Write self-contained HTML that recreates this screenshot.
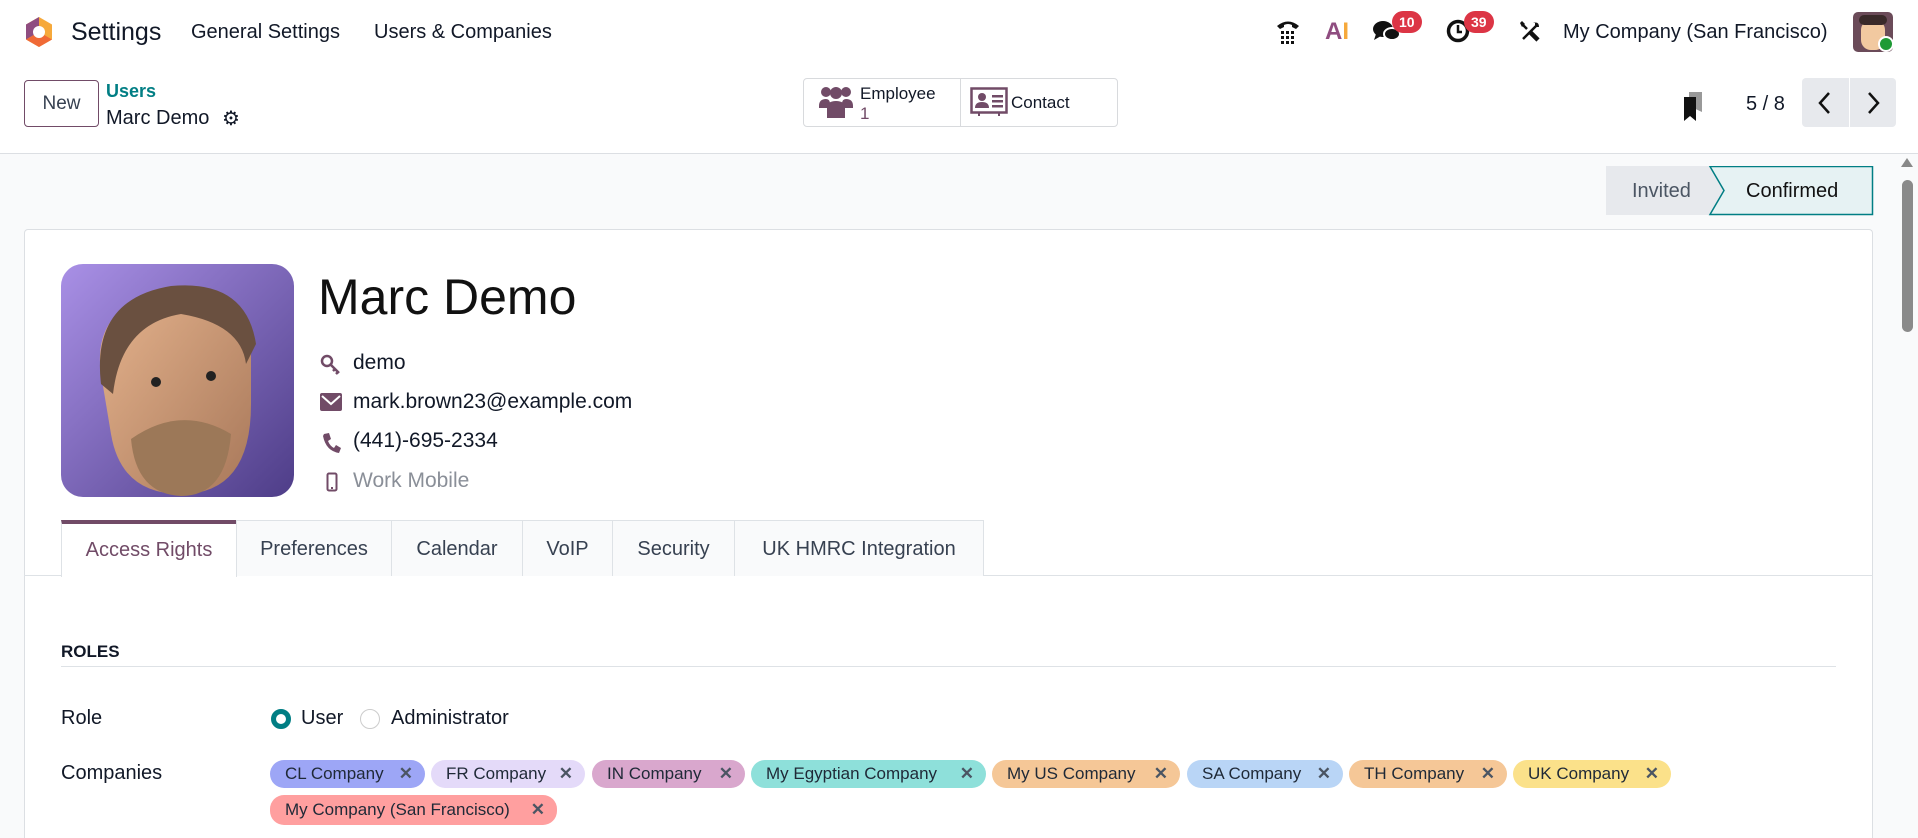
<!DOCTYPE html>
<html><head><meta charset="utf-8"><style>
*{box-sizing:border-box;margin:0;padding:0}
html,body{width:1918px;height:838px;overflow:hidden}
body{background:#fff;font-family:"Liberation Sans",sans-serif;color:#111827;position:relative}
.a{position:absolute;white-space:nowrap}
.badge{position:absolute;background:#dc3545;color:#fff;font-size:14px;font-weight:bold;border-radius:12px;height:22px;line-height:22px;padding:0 7px}
.tag{position:absolute;height:28px;line-height:28px;border-radius:14px;font-size:17px;padding-left:15px;color:#1f2937}
.tag span{position:absolute;right:12px;top:0;font-weight:bold;color:#4b5563;font-size:17px}
.tab{position:absolute;top:520px;height:56px;line-height:56px;text-align:center;font-size:20px;background:#f9fafb;border:1px solid #dee2e6;border-bottom:none;color:#374151}
</style></head><body>
<svg class="a" style="left:24px;top:17px" width="30" height="30" viewBox="0 0 30 30">
<polygon points="15,0 28,7.5 28,22.5 15,30 2,22.5 2,7.5" fill="#f6a93b"/>
<polygon points="15,0 2,7.5 2,22.5 15,15" fill="#8f4d80"/>
<polygon points="2,22.5 15,30 28,22.5 15,15" fill="#f06a36"/>
<circle cx="15" cy="15" r="6" fill="#fff"/></svg>
<div class="a" style="left:71px;top:18px;font-size:25px">Settings</div>
<div class="a" style="left:191px;top:21px;font-size:20px">General Settings</div>
<div class="a" style="left:374px;top:21px;font-size:20px">Users &amp; Companies</div>
<svg class="a" style="left:1275px;top:17px" width="26" height="28" viewBox="0 0 26 28"><path d="M2 9 Q13 0 24 9 L21 12 L17 10 L17 8 Q13 6 9 8 L9 10 L5 12Z" fill="#111"/><g fill="#111"><rect x="6" y="14" width="3" height="3"/><rect x="11" y="14" width="3" height="3"/><rect x="16" y="14" width="3" height="3"/><rect x="6" y="19" width="3" height="3"/><rect x="11" y="19" width="3" height="3"/><rect x="16" y="19" width="3" height="3"/><rect x="6" y="24" width="3" height="3"/><rect x="11" y="24" width="3" height="3"/><rect x="16" y="24" width="3" height="3"/></g></svg>
<div class="a" style="left:1325px;top:18px;font-size:24px;font-weight:bold;color:#8f4d80">A<span style="color:#f6a93b">I</span></div>
<svg class="a" style="left:1372px;top:19px" width="30" height="26" viewBox="0 0 30 26"><ellipse cx="11" cy="10" rx="10" ry="8" fill="#111"/><path d="M4 15 L2 21 L9 17Z" fill="#111"/><ellipse cx="20" cy="15" rx="8" ry="6" fill="#111" stroke="#fff" stroke-width="2"/></svg>
<div class="badge" style="left:1392px;top:11px">10</div>
<svg class="a" style="left:1446px;top:18px" width="26" height="26" viewBox="0 0 26 26"><circle cx="12" cy="13" r="9.5" fill="none" stroke="#111" stroke-width="3.5"/><path d="M12 7 V14 H16" stroke="#111" stroke-width="2.5" fill="none"/></svg>
<div class="badge" style="left:1464px;top:11px">39</div>
<svg class="a" style="left:1518px;top:20px" width="24" height="24" viewBox="0 0 24 24"><path d="M5 19 L19 5" stroke="#111" stroke-width="2.5"/><path d="M15 3 Q21 1 21 7 L18 7 L17 6 L17 3Z" fill="#111"/><path d="M4 4 L9 9" stroke="#111" stroke-width="2.5"/><path d="M2 3 L4 1 L7 4 L4 7Z" fill="#111"/><path d="M12 12 L20 20" stroke="#111" stroke-width="4.5"/></svg>
<div class="a" style="left:1563px;top:21px;font-size:20px">My Company (San Francisco)</div>
<div class="a" style="left:1853px;top:12px;width:40px;height:40px;border-radius:5px;background:#6b4b59;overflow:hidden"><div style="position:absolute;left:8px;top:8px;width:24px;height:30px;border-radius:10px;background:#f2c9a0"></div><div style="position:absolute;left:6px;top:3px;width:28px;height:10px;border-radius:6px;background:#3a2a2a"></div></div>
<div class="a" style="left:1878px;top:36px;width:16px;height:16px;border-radius:50%;background:#1e9a35;border:2px solid #fff"></div>
<div class="a" style="left:24px;top:80px;width:75px;height:47px;border:1px solid #714b67;border-radius:4px;text-align:center;line-height:45px;font-size:19px;color:#374151">New</div>
<div class="a" style="left:106px;top:81px;font-size:18px;color:#017e84;font-weight:bold">Users</div>
<div class="a" style="left:106px;top:107px;font-size:20px">Marc Demo</div>
<div class="a" style="left:222px;top:106px;font-size:20px">⚙</div>
<div class="a" style="left:803px;top:78px;width:315px;height:49px;border:1px solid #d8dadd;border-radius:4px"></div>
<div class="a" style="left:960px;top:79px;width:1px;height:47px;background:#d8dadd"></div>
<svg class="a" style="left:818px;top:84px" width="36" height="36" viewBox="0 0 36 36" fill="#714b67"><circle cx="8" cy="8" r="5"/><circle cx="28" cy="8" r="5"/><circle cx="18" cy="9" r="6"/><path d="M1 22 Q1 15 8 15 Q12 15 12 20 V24 H1Z"/><path d="M35 22 Q35 15 28 15 Q24 15 24 20 V24 H35Z"/><path d="M9 34 V24 Q9 17 18 17 Q27 17 27 24 V34Z"/></svg>
<div class="a" style="left:860px;top:84px;font-size:17px">Employee</div>
<div class="a" style="left:860px;top:104px;font-size:17px;color:#714b67">1</div>
<svg class="a" style="left:970px;top:87px" width="38" height="30" viewBox="0 0 38 30"><rect x="1.5" y="1.5" width="35" height="24" fill="none" stroke="#714b67" stroke-width="2.5"/><circle cx="12" cy="10" r="4" fill="#714b67"/><path d="M5 21 Q5 15 12 15 Q19 15 19 21Z" fill="#714b67"/><rect x="22" y="8" width="11" height="2.5" fill="#714b67"/><rect x="22" y="13" width="11" height="2.5" fill="#714b67"/><rect x="22" y="18" width="11" height="2.5" fill="#714b67"/><path d="M9 26 V29 M29 26 V29" stroke="#714b67" stroke-width="2"/></svg>
<div class="a" style="left:1011px;top:93px;font-size:17px">Contact</div>
<svg class="a" style="left:1682px;top:92px" width="22" height="30" viewBox="0 0 22 30"><path d="M7 0 H20 V20 L7 14Z" fill="#999"/><path d="M2 5 H14 V29 L8 24 L2 29Z" fill="#111"/></svg>
<div class="a" style="left:1746px;top:93px;font-size:20px">5 / 8</div>
<div class="a" style="left:1802px;top:78px;width:94px;height:49px;background:#e7e9ed;border-radius:4px"></div>
<div class="a" style="left:1849px;top:78px;width:1px;height:49px;background:#fff"></div>
<svg class="a" style="left:1814px;top:90px" width="22" height="26" viewBox="0 0 22 26"><path d="M15 3 L6 13 L15 23" stroke="#111" stroke-width="2.5" fill="none"/></svg>
<svg class="a" style="left:1862px;top:90px" width="22" height="26" viewBox="0 0 22 26"><path d="M7 3 L16 13 L7 23" stroke="#111" stroke-width="2.5" fill="none"/></svg>
<div class="a" style="left:0;top:153px;width:1918px;height:685px;background:#f9fafb;border-top:1px solid #dcdfe3"></div>
<div class="a" style="left:1901px;top:158px;width:0;height:0;border-left:6px solid transparent;border-right:6px solid transparent;border-bottom:9px solid #888"></div>
<div class="a" style="left:1902px;top:180px;width:11px;height:152px;border-radius:6px;background:#8a8a8a"></div>
<svg class="a" style="left:1606px;top:166px" width="268" height="50" viewBox="0 0 268 50"><rect x="0" y="0" width="120" height="49" fill="#e7e9ed"/><path d="M104 0.5 H266.5 V48.5 H104 L118 24.5Z" fill="#e6f2f3" stroke="#017e84" stroke-width="1.5"/></svg>
<div class="a" style="left:1632px;top:180px;font-size:20px;color:#4b5563">Invited</div>
<div class="a" style="left:1746px;top:180px;font-size:20px;color:#111">Confirmed</div>
<div class="a" style="left:24px;top:229px;width:1849px;height:609px;background:#fff;border:1px solid #dcdfe3;border-bottom:none;border-radius:4px 4px 0 0"></div>
<svg class="a" style="left:61px;top:264px" width="233" height="233" viewBox="0 0 233 233"><defs><linearGradient id="g" x1="0" y1="0" x2="1" y2="1"><stop offset="0" stop-color="#a990e6"/><stop offset="1" stop-color="#4e3d88"/></linearGradient><linearGradient id="f" x1="0" y1="0" x2="1" y2="1"><stop offset="0" stop-color="#e6b48e"/><stop offset="1" stop-color="#a8785a"/></linearGradient></defs><rect width="233" height="233" rx="22" fill="url(#g)"/><path d="M40 110 Q30 40 110 25 Q180 20 190 90 L190 140 Q190 230 120 230 Q60 230 50 170Z" fill="url(#f)"/><path d="M40 120 Q30 35 110 22 Q185 15 195 80 L185 100 Q180 60 120 50 Q60 60 52 130Z" fill="#6a5040"/><path d="M70 175 Q120 140 170 170 Q165 232 120 232 Q75 230 70 175Z" fill="#9c7858"/><circle cx="95" cy="118" r="5" fill="#222"/><circle cx="150" cy="112" r="5" fill="#222"/></svg>
<div class="a" style="left:318px;top:268px;font-size:50px;color:#111">Marc Demo</div>
<svg class="a" style="left:320px;top:354px" width="22" height="22" viewBox="0 0 22 22"><circle cx="7" cy="7" r="5" fill="none" stroke="#714b67" stroke-width="2.5"/><path d="M10 10 L19 19 M15 15 L13 17 M18 18 L16 20" stroke="#714b67" stroke-width="2.5"/></svg>
<div class="a" style="left:353px;top:351px;font-size:21px">demo</div>
<svg class="a" style="left:320px;top:393px" width="22" height="18" viewBox="0 0 22 18"><rect width="22" height="18" rx="2" fill="#714b67"/><path d="M2 3 L11 11 L20 3" stroke="#fff" stroke-width="2" fill="none"/></svg>
<div class="a" style="left:353px;top:390px;font-size:21px">mark.brown23@example.com</div>
<svg class="a" style="left:321px;top:432px" width="20" height="22" viewBox="0 0 20 22"><path d="M3 2 L8 1 L10 7 L7 9 Q9 14 13 16 L15 13 L20 16 L18 21 Q5 19 2 4Z" fill="#714b67"/></svg>
<div class="a" style="left:353px;top:429px;font-size:21px">(441)-695-2334</div>
<svg class="a" style="left:326px;top:472px" width="12" height="20" viewBox="0 0 12 20"><rect x="1.5" y="1.5" width="9" height="17" rx="1.5" fill="none" stroke="#714b67" stroke-width="2"/><rect x="5" y="15" width="2" height="2" fill="#714b67"/></svg>
<div class="a" style="left:353px;top:469px;font-size:21px;color:#8a8f98">Work Mobile</div>
<div class="a" style="left:24px;top:575px;width:1849px;height:1px;background:#dee2e6"></div>
<div class="tab" style="left:61px;width:176px;background:#fff;border-top:4px solid #714b67;line-height:52px;color:#714b67;height:57px">Access Rights</div>
<div class="tab" style="left:236px;width:156px">Preferences</div>
<div class="tab" style="left:391px;width:132px">Calendar</div>
<div class="tab" style="left:522px;width:91px">VoIP</div>
<div class="tab" style="left:612px;width:123px">Security</div>
<div class="tab" style="left:734px;width:250px">UK HMRC Integration</div>
<div class="a" style="left:61px;top:642px;font-size:17px;font-weight:bold">ROLES</div>
<div class="a" style="left:61px;top:666px;width:1775px;height:1px;background:#dee2e6"></div>
<div class="a" style="left:61px;top:707px;font-size:20px">Role</div>
<div class="a" style="left:271px;top:709px;width:20px;height:20px;border-radius:50%;border:5px solid #017e84;background:#fff"></div>
<div class="a" style="left:301px;top:707px;font-size:20px">User</div>
<div class="a" style="left:360px;top:709px;width:20px;height:20px;border-radius:50%;border:1px solid #ccc;background:#fff"></div>
<div class="a" style="left:391px;top:707px;font-size:20px">Administrator</div>
<div class="a" style="left:61px;top:762px;font-size:20px">Companies</div>
<div class="tag" style="left:270px;top:760px;width:155px;background:#9da6f6">CL Company<span>✕</span></div>
<div class="tag" style="left:431px;top:760px;width:154px;background:#e4daf9">FR Company<span>✕</span></div>
<div class="tag" style="left:592px;top:760px;width:153px;background:#d9a7cd">IN Company<span>✕</span></div>
<div class="tag" style="left:751px;top:760px;width:235px;background:#8ee0da">My Egyptian Company<span>✕</span></div>
<div class="tag" style="left:992px;top:760px;width:188px;background:#f5c797">My US Company<span>✕</span></div>
<div class="tag" style="left:1187px;top:760px;width:156px;background:#b9d5f6">SA Company<span>✕</span></div>
<div class="tag" style="left:1349px;top:760px;width:158px;background:#f5c797">TH Company<span>✕</span></div>
<div class="tag" style="left:1513px;top:760px;width:158px;background:#fbe18a">UK Company<span>✕</span></div>
<div class="tag" style="left:270px;top:795px;width:287px;height:30px;line-height:30px;background:#ff9f9f">My Company (San Francisco)<span>✕</span></div>
</body></html>
